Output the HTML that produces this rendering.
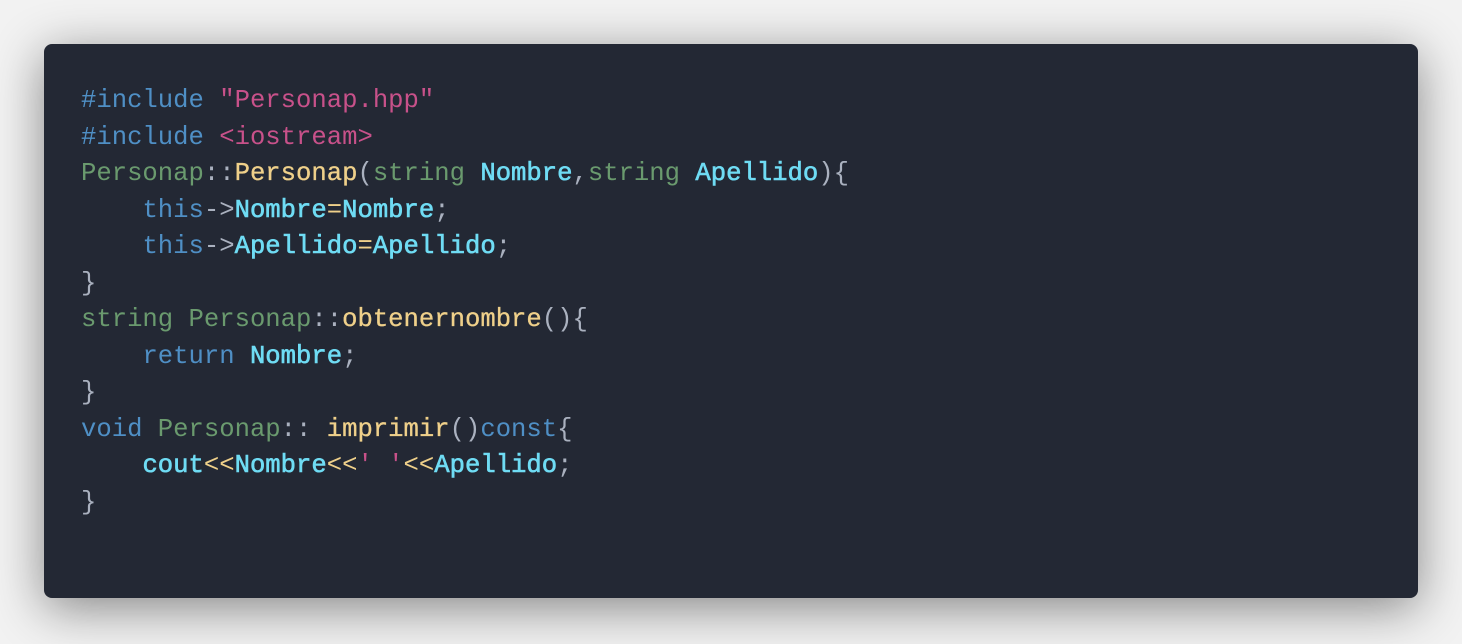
<!DOCTYPE html>
<html><head><meta charset="utf-8"><style>
html,body{margin:0;padding:0;}
body{width:1462px;height:644px;background:#f2f2f2;position:relative;overflow:hidden;}
.card{position:absolute;left:44px;top:44px;width:1374px;height:554px;background:#232834;border-radius:8px;box-shadow:0 10px 50px rgba(0,0,0,0.45);}
pre{position:absolute;left:81px;top:83px;margin:0;font-family:"Liberation Mono","DejaVu Sans Mono",monospace;font-size:25.6px;line-height:36.5px;color:#aab1bf;white-space:pre;}
.k{color:#4f8fc5}.s{color:#c8518a}.t{color:#6a9a6e}.f{color:#efd08a;-webkit-text-stroke:0.3px #efd08a}.v{color:#6fdcf4;-webkit-text-stroke:0.6px #6fdcf4}.y{color:#efd08a}
</style></head><body>
<div class="card"></div>
<pre><span class="k">#include</span> <span class="s">"Personap.hpp"</span>
<span class="k">#include</span> <span class="s">&lt;iostream&gt;</span>
<span class="t">Personap</span>::<span class="f">Personap</span>(<span class="t">string</span> <span class="v">Nombre</span>,<span class="t">string</span> <span class="v">Apellido</span>){
    <span class="k">this</span>-&gt;<span class="v">Nombre</span><span class="y">=</span><span class="v">Nombre</span>;
    <span class="k">this</span>-&gt;<span class="v">Apellido</span><span class="y">=</span><span class="v">Apellido</span>;
}
<span class="t">string</span> <span class="t">Personap</span>::<span class="f">obtenernombre</span>(){
    <span class="k">return</span> <span class="v">Nombre</span>;
}
<span class="k">void</span> <span class="t">Personap</span>:: <span class="f">imprimir</span>()<span class="k">const</span>{
    <span class="v">cout</span><span class="y">&lt;&lt;</span><span class="v">Nombre</span><span class="y">&lt;&lt;</span><span class="s">' '</span><span class="y">&lt;&lt;</span><span class="v">Apellido</span>;
}</pre>
</body></html>
